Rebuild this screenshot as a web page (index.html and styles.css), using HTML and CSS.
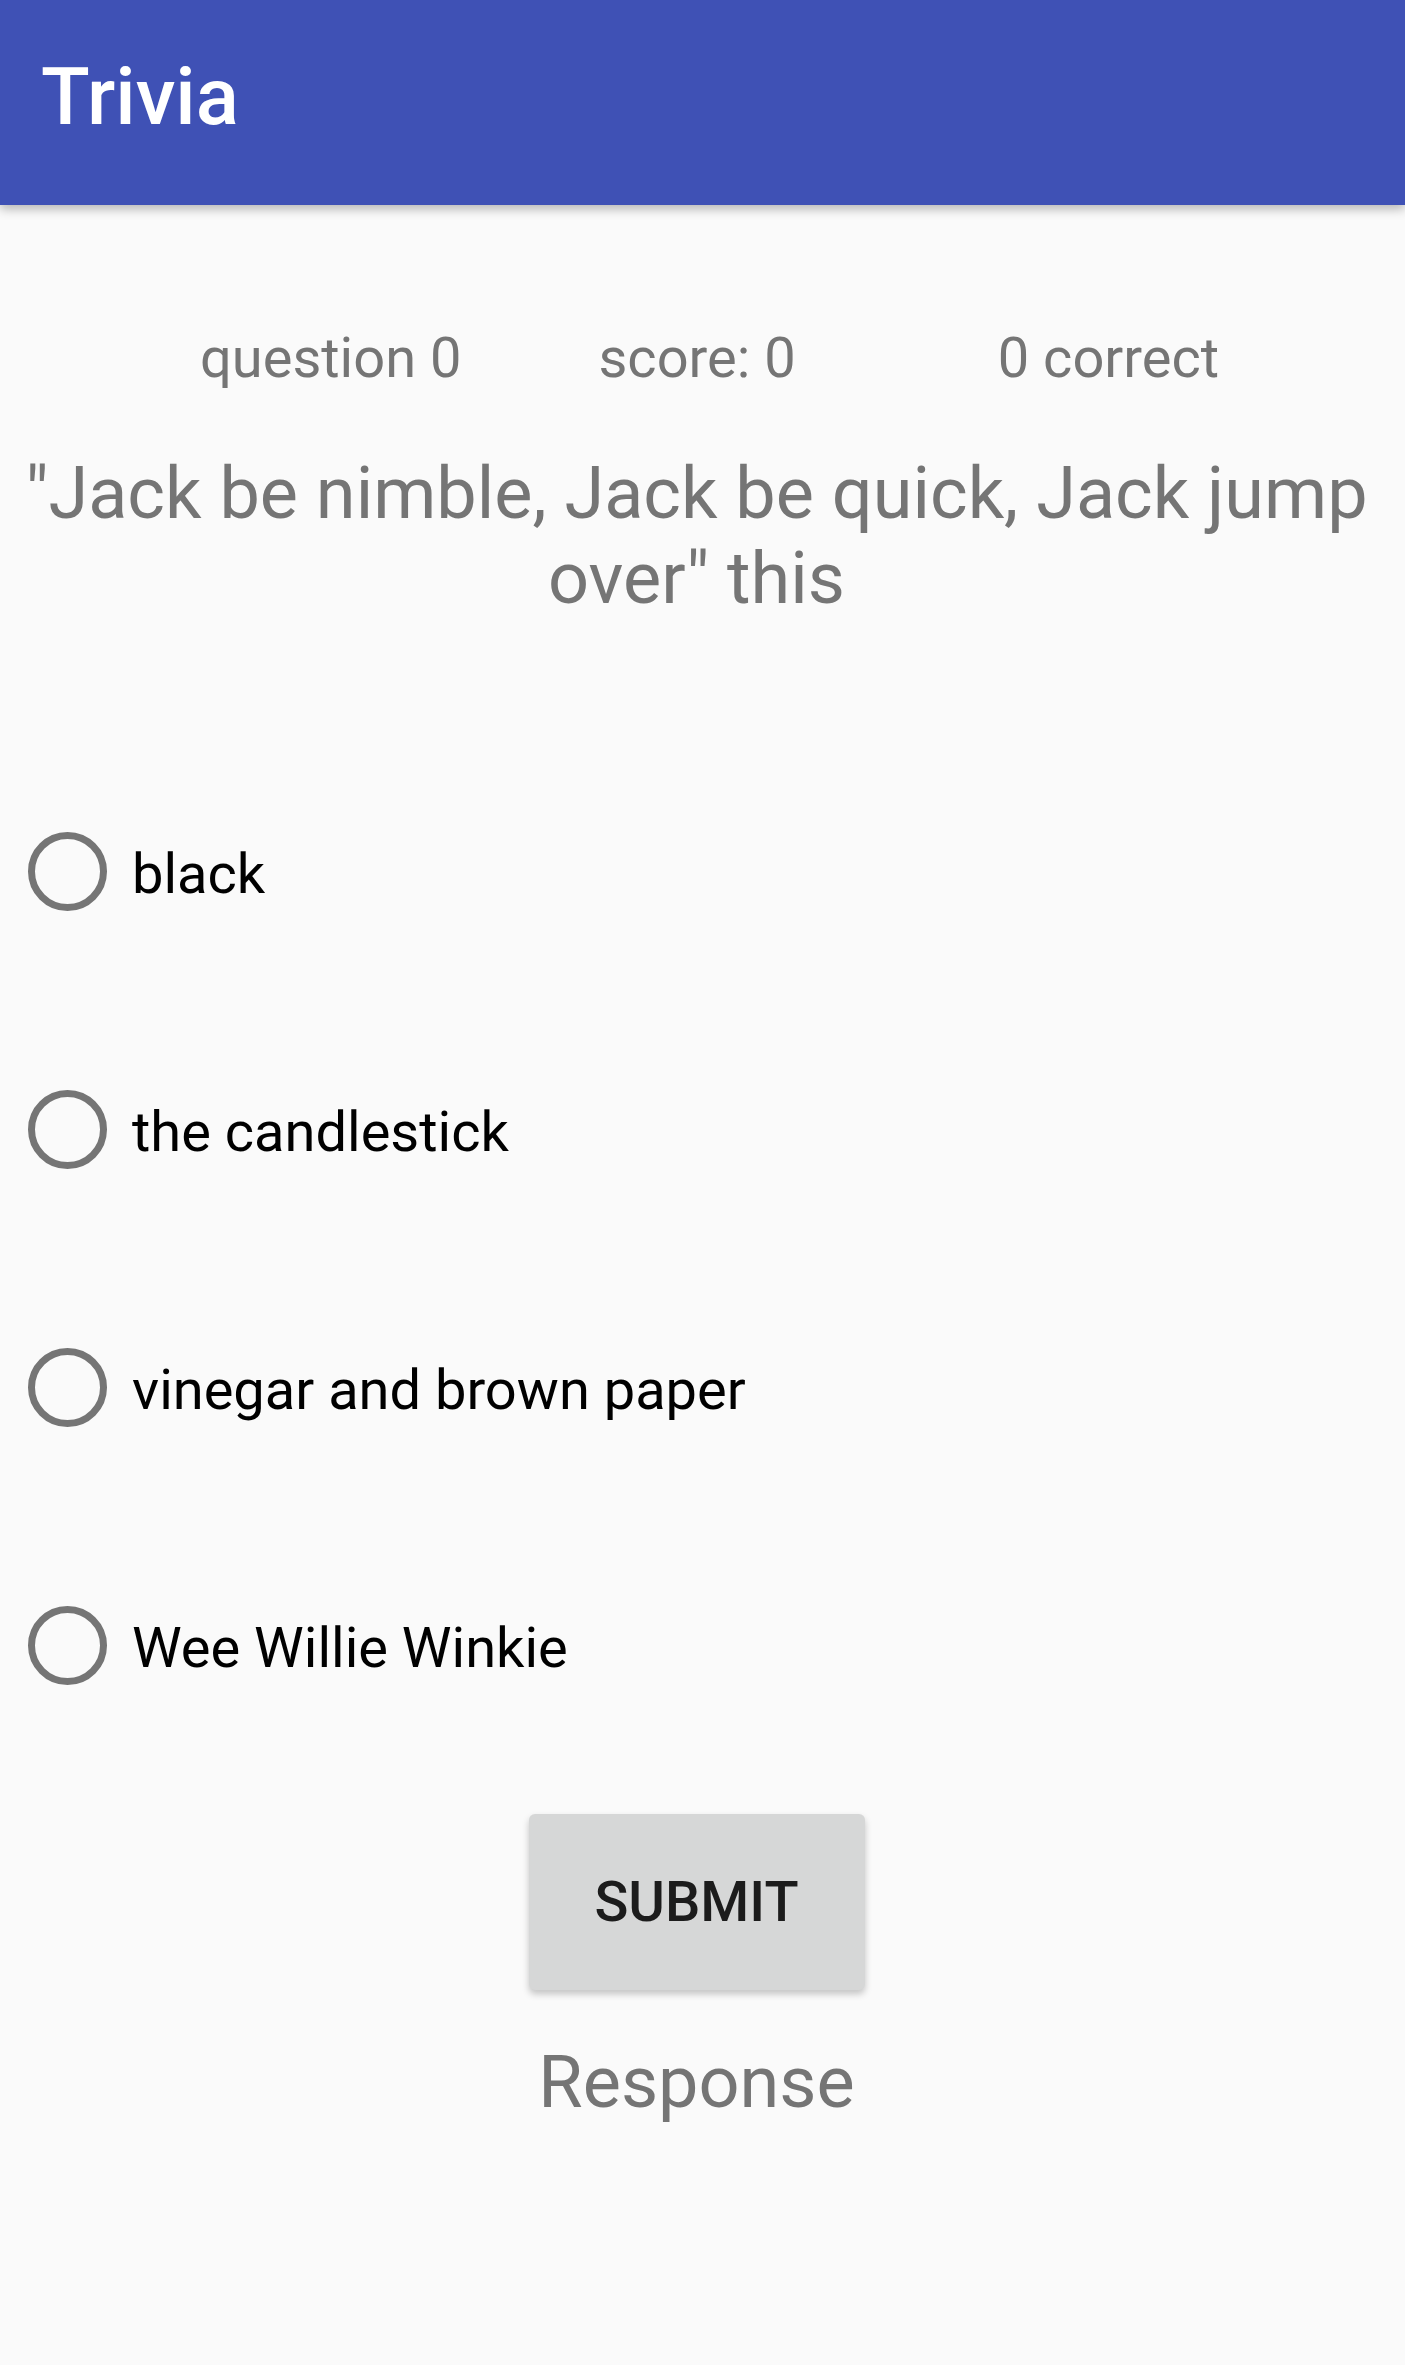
FILE: index.html
```html
<!DOCTYPE html>
<html>
<head>
<meta charset="utf-8">
<title>Trivia</title>
<link rel="stylesheet" href="styles.css">
</head>
<body>
<header class="toolbar">
  <h1 class="toolbar-title">Trivia</h1>
</header>
<main class="content">
  <div class="stats">
    <span class="stat stat-question">question 0</span>
    <span class="stat stat-score">score: 0</span>
    <span class="stat stat-correct">0 correct</span>
  </div>
  <p class="question">"Jack be nimble, Jack be quick, Jack jump over" this</p>
  <div class="options">
    <label class="option"><span class="radio"></span><span class="option-text">black</span></label>
    <label class="option"><span class="radio"></span><span class="option-text">the candlestick</span></label>
    <label class="option"><span class="radio"></span><span class="option-text">vinegar and brown paper</span></label>
    <label class="option"><span class="radio"></span><span class="option-text">Wee Willie Winkie</span></label>
  </div>
  <div class="actions">
    <button class="submit">SUBMIT</button>
  </div>
  <p class="response">Response</p>
</main>
</body>
</html>
```
FILE: styles.css
```css
html, body {
  margin: 0;
  padding: 0;
}
body {
  background: #fafafa;
  font-family: Roboto, "Liberation Sans", sans-serif;
  width: 1405px;
  min-height: 2365px;
}
.toolbar {
  height: 205px;
  background: #3f51b5;
  box-shadow: 0 4px 10px rgba(0, 0, 0, 0.28);
  display: flex;
  align-items: center;
  padding-left: 41px;
  position: relative;
  z-index: 1;
}
.toolbar-title {
  margin: 0;
  color: #ffffff;
  font-size: 80px;
  font-weight: 500;
  line-height: 94px;
  padding-bottom: 12px;
}
.content {
  display: flex;
  flex-direction: column;
  padding-right: 12px;
}
.stats {
  margin-top: 120px;
  display: flex;
  padding-left: 200px;
  color: #757575;
  font-size: 56px;
  line-height: 66px;
}
.stat-score {
  margin-left: 137px;
}
.stat-correct {
  margin-left: 202px;
}
.question {
  margin: 60px 10px 0 10px;
  text-align: center;
  color: #757575;
  font-size: 72px;
  line-height: 85px;
}
.options {
  margin-top: 121px;
  display: flex;
  flex-direction: column;
}
.option {
  height: 258px;
  display: flex;
  align-items: center;
  padding-left: 28px;
}
.radio {
  width: 79px;
  height: 79px;
  box-sizing: border-box;
  border: 7.5px solid #757575;
  border-radius: 50%;
  flex: none;
}
.option-text {
  margin-left: 25px;
  padding-top: 6px;
  font-size: 56px;
  line-height: 67px;
  color: #000000;
}
.actions {
  margin-top: 40px;
  display: flex;
  justify-content: center;
}
.submit {
  width: 336px;
  height: 176px;
  border: none;
  border-radius: 6px;
  background: #d6d7d7;
  box-shadow: 0 4px 7px rgba(0, 0, 0, 0.22);
  font-family: Roboto, "Liberation Sans", sans-serif;
  font-size: 56px;
  font-weight: 500;
  color: #1c1c1c;
  padding: 0;
}
.response {
  margin: 50px 0 0 0;
  text-align: center;
  color: #757575;
  font-size: 72px;
  line-height: 86px;
}
```
